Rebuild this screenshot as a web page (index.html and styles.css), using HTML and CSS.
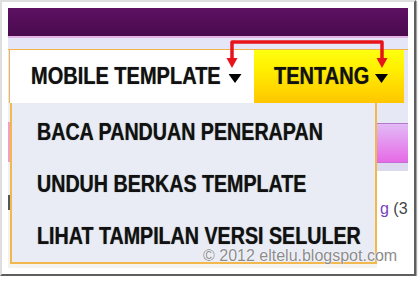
FILE: index.html
```html
<!DOCTYPE html>
<html>
<head>
<meta charset="utf-8">
<link rel="stylesheet" href="styles.css">
</head>
<body>
<div class="frame">
  <div class="shot">
    <div class="topbar"></div>
    <div class="strip"></div>
    <div class="nav">
      <div class="nav-item nav-main">
        <span class="squeeze"><span>MOBILE TEMPLATE</span><svg class="caret" width="15" height="9" viewBox="0 0 15 9"><polygon points="0,0 15,0 7.5,9" fill="#000"/></svg></span>
      </div>
      <div class="nav-item nav-tentang">
        <span class="squeeze"><span>TENTANG</span><svg class="caret" width="15" height="9" viewBox="0 0 15 9"><polygon points="0,0 15,0 7.5,9" fill="#000"/></svg></span>
      </div>
    </div>
    <div class="lower">
      <div class="gutter"></div>
      <ul class="dropdown">
        <li><span class="squeeze sq-menu">BACA PANDUAN PENERAPAN</span></li>
        <li><span class="squeeze sq-menu">UNDUH BERKAS TEMPLATE</span></li>
        <li><span class="squeeze sq-menu">LIHAT TAMPILAN VERSI SELULER</span></li>
      </ul>
      <div class="side">
        <div class="side-a"></div>
        <div class="side-b"></div>
        <div class="side-c"></div>
        <div class="side-text"><span class="link">g</span> (3</div>
      </div>
    </div>
    <svg class="arrows" width="162" height="32" viewBox="0 0 162 32">
      <path d="M6 21 V3 H156 V21" fill="none" stroke="#e8141c" stroke-width="3.5" stroke-linejoin="round"/>
      <polygon points="0.5,19 11.5,19 6,29" fill="#e8141c"/>
      <polygon points="150.5,19 161.5,19 156,29" fill="#e8141c"/>
    </svg>
    <div class="copyright">© 2012 eltelu.blogspot.com</div>
  </div>
</div>
</body>
</html>
```

FILE: styles.css
```css
html, body {
  margin: 0;
  padding: 0;
  background: #ffffff;
}

.frame {
  display: inline-block;
  padding: 6px;
  border-style: solid;
  border-width: 2px;
  border-color: #dedede #5e5e5e #5e5e5e #dedede;
  background: #ffffff;
  box-shadow: 1px 1px 1px rgba(0, 0, 0, 0.35);
}

.shot {
  position: relative;
  width: 400px;
  height: 260px;
  overflow: hidden;
  display: flex;
  flex-direction: column;
  background: #f6f4ee;
  font-family: "Liberation Sans", Arial, sans-serif;
}

.topbar {
  height: 28px;
  background: linear-gradient(#5d1162, #4a0a4e);
}

.strip {
  height: 13px;
  box-sizing: border-box;
  border-top: 2px solid #e6b4e4;
  background: #e5e7f8;
}

.nav {
  display: flex;
  height: 54px;
  box-sizing: border-box;
  border-top: 1px solid #f2b24c;
  padding-left: 1px;
  background: #e6e6f2;
}

.nav-item {
  height: 53px;
  line-height: 53px;
  font-size: 23px;
  font-weight: bold;
  color: #111;
  white-space: nowrap;
  box-sizing: border-box;
  text-shadow: 0 0 1px rgba(0, 0, 0, 0.55);
}

.nav-main {
  width: 245px;
  border-left: 1px solid #f2b24c;
  padding-left: 21px;
  background: #ffffff;
}

.nav-tentang {
  width: 150px;
  padding-left: 20px;
  background: linear-gradient(#ffff10 0%, #fff000 35%, #ffc600 100%);
}

.squeeze {
  display: inline-flex;
  align-items: center;
  transform: scaleX(0.87);
  transform-origin: 0 50%;
}

.caret {
  margin-left: 7px;
  margin-top: 4px;
}

.nav-main .caret {
  margin-left: 9px;
}

.lower {
  flex: 1;
  display: flex;
}

.gutter {
  width: 2px;
  background: linear-gradient(#eef0f8 0, #eef0f8 19px, #f2a2c0 19px, #f0a0c0 59px, #eef0f8 59px, #eef0f8 92px, #50585a 92px, #50585a 107px, #f4f2ec 107px);
}

.dropdown {
  list-style: none;
  margin: 0;
  padding: 3px 0 0 25px;
  width: 367px;
  height: 161px;
  box-sizing: border-box;
  background: #e9ecf5;
  border: 2px solid #f3b84c;
  border-top: none;
}

.dropdown li {
  height: 52px;
  line-height: 52px;
  font-size: 23px;
  font-weight: bold;
  color: #111;
  white-space: nowrap;
  text-shadow: 0 0 1px rgba(0, 0, 0, 0.55);
}

.sq-menu {
  transform: scaleX(0.855);
}

.side {
  width: 31px;
  background: #ffffff;
  overflow: hidden;
}

.side-a {
  height: 20px;
  background: #e6e8f6;
}

.side-b {
  height: 40px;
  box-sizing: border-box;
  border-top: 1px solid #b478cc;
  border-bottom: 1px solid #c66cd6;
  background: linear-gradient(#e2baf6, #e66ae6);
}

.side-c {
  height: 8px;
  background: #dcdaee;
}

.side-text {
  padding: 29px 0 0 3px;
  font-size: 16px;
  line-height: 18px;
  color: #444;
  white-space: nowrap;
}

.link {
  color: #7a3ec0;
}

.arrows {
  position: absolute;
  left: 218px;
  top: 31px;
}

.copyright {
  position: absolute;
  left: 195px;
  top: 239px;
  font-size: 16px;
  color: #8c8c8c;
  white-space: nowrap;
  text-shadow: 0 0 2px #fff, 0 0 1px #fff;
}
```
